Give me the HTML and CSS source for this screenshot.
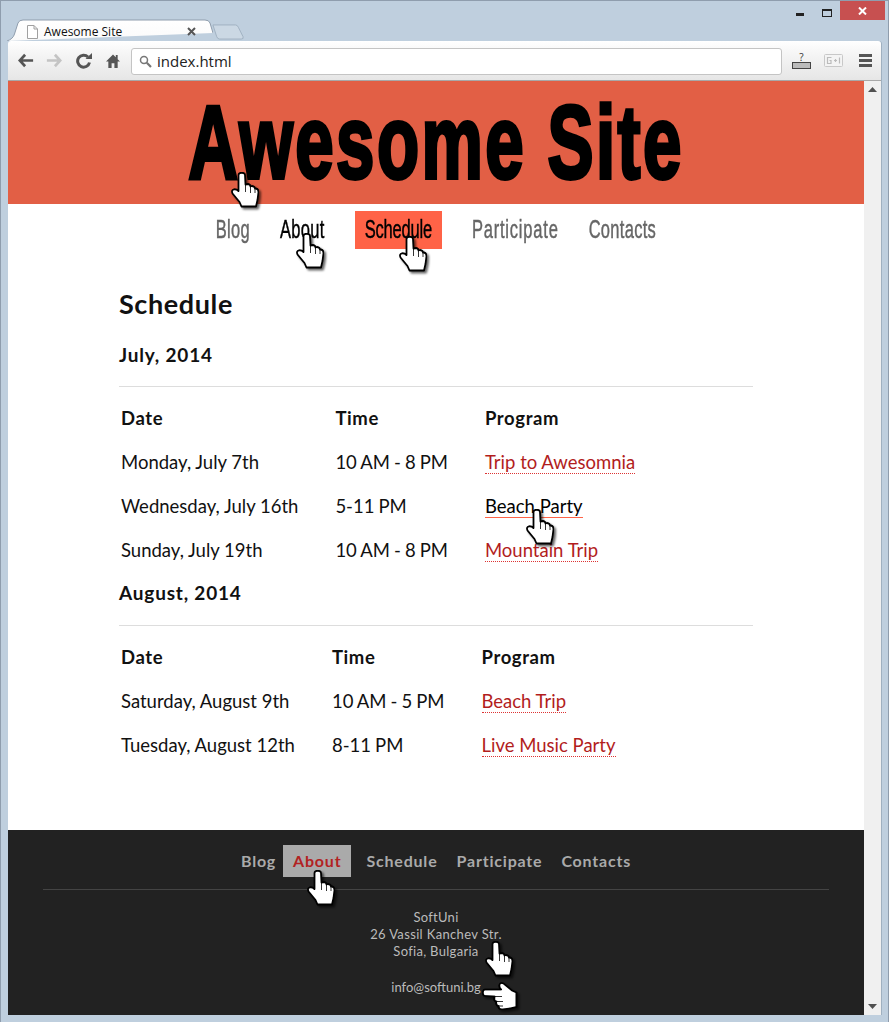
FILE: index.html
```html
<!DOCTYPE html>
<html>
    <head>
        <title>Awesome Site</title>
        <link rel="stylesheet" href="styles.css">
    </head>

    <body>
        <svg class="defs" width="0" height="0">
            <symbol id="hand" viewBox="0 0 28 36">
                <path d="M7.500 3C7.500 0 14 0 14 3L14.500 12.500 17 12Q19.500 12.500 19.500 14.500L21 14Q24 14.500 24 16.500L25 16.500Q27.500 17 27.500 20L26.500 28 25 34.500H10.500L8.500 30 1.500 21.500Q0 18 3 17.300 5.500 17 7.500 19Z" fill="#fff" stroke="#000" stroke-width="1.800" stroke-linejoin="round"/>
                <path d="M14.500 12.500V20M19.500 14.500V21M24 16.500V21" fill="none" stroke="#000" stroke-width=".8"/>
            </symbol>
        </svg>

        <div class="window">
            <div class="titlebar">
                <div class="tab">
                    <svg class="tabShape" width="206" height="22" viewBox="0 0 206 22">
                        <defs>
                            <linearGradient id="tabFill" x1="0" y1="0" x2="0" y2="1">
                                <stop offset="0" stop-color="#fff"/>
                                <stop offset="1" stop-color="#fafafa"/>
                            </linearGradient>
                        </defs>
                        <path d="M0 22Q6 20 7.500 15L11 4Q12 1 16 1H198Q202 1 203 4L206 14" fill="url(#tabFill)" stroke="#8f9dad"/>
                    </svg>
                    <svg class="pageIcon" width="11" height="14" viewBox="0 0 11 14">
                        <path d="M.5 .5H7L10.500 4V13.500H.5ZM7 .5V4H10.500" fill="#fff" stroke="#a0a0a0"/>
                    </svg>
                    <span class="tabTitle">Awesome Site</span>
                    <svg class="tabClose" width="9" height="9" viewBox="0 0 9 9">
                        <path d="M1 1L8 8M8 1L1 8" stroke="#555" stroke-width="2"/>
                    </svg>
                </div>
                <svg class="newTab" width="32" height="18" viewBox="0 0 34 18">
                    <path d="M1 1.500H25Q27 1.500 28 4L33 14Q34 16.500 31 16.500H8Q6 16.500 5 14Z" fill="#cbd8e4" stroke="#9fb0c0"/>
                </svg>
                <div class="windowControls">
                    <svg width="8" height="3" class="minimize"><rect width="8" height="3" fill="#222"/></svg>
                    <svg width="10" height="8" class="maximize"><rect x=".5" y=".5" width="9" height="7" fill="none" stroke="#222"/><rect width="10" height="2" fill="#222"/></svg>
                    <div class="closeButton">
                        <svg width="9" height="8" viewBox="0 0 9 8"><path d="M1 .5L8 7.500M8 .5L1 7.500" stroke="#fff" stroke-width="2"/></svg>
                    </div>
                </div>
            </div>

            <div class="toolbar">
                <svg class="back" width="16" height="15" viewBox="0 0 18 16"><path d="M8 1.500L2 8 8 14.500M2.500 8H17" fill="none" stroke="#555" stroke-width="3"/></svg>
                <svg class="forward" width="16" height="15" viewBox="0 0 18 16"><path d="M10 1.500L16 8 10 14.500M15.500 8H1" fill="none" stroke="#c4c4c4" stroke-width="3"/></svg>
                <svg class="reload" width="16" height="16" viewBox="0 0 16 16"><path d="M13.500 9.500A6 6 0 1 1 12 4" fill="none" stroke="#555" stroke-width="3"/><path d="M9.500 6H16V0Z" fill="#555"/></svg>
                <svg class="home" width="14" height="16" viewBox="0 0 15 16"><path d="M7.500 1L0 8.500H2.500V15.500H6V10.500H9V15.500H12.500V8.500H15L12.500 6V1.500H10.500V4Z" fill="#555"/></svg>
                <div class="addressBar">
                    <svg width="13" height="13" viewBox="0 0 13 13"><circle cx="5" cy="5" r="3.500" fill="none" stroke="#777" stroke-width="1.500"/><path d="M7.800 7.800L12 12" stroke="#777" stroke-width="2.200"/></svg>
                    <span>index.html</span>
                </div>
                <div class="helpIcon">
                    <span>?</span>
                    <i></i>
                </div>
                <svg class="gplus" width="19" height="13" viewBox="0 0 19 13"><rect x=".5" y=".5" width="18" height="12" rx="1" fill="#f4f4f4" stroke="#c8c8c8"/><path d="M7.500 3.500H3.500V9.500H7V6.500H5.500M10 6.500H13M11.500 5V8M15.500 3.500V9.500" fill="none" stroke="#bbb" stroke-width="1.200"/></svg>
                <div class="menuIcon"><i></i><i></i><i></i></div>
            </div>

            <div class="viewport">
                <div class="page">
                    <header class="siteHeader">
                        <h1><span class="label">Awesome Site</span><svg class="cursor cursorTitle"><use href="#hand"/></svg></h1>
                    </header>

                    <nav class="mainNav">
                        <a href="#"><span class="label">Blog</span></a>
                        <a href="#" class="hovered"><span class="label">About</span><svg class="cursor cursorAbout"><use href="#hand"/></svg></a>
                        <a href="#" class="active"><span class="label">Schedule</span><svg class="cursor cursorSchedule"><use href="#hand"/></svg></a>
                        <a href="#" class="wide"><span class="label">Participate</span></a>
                        <a href="#"><span class="label">Contacts</span></a>
                    </nav>

                    <main class="content">
                        <h2>Schedule</h2>

                        <h3>July, 2014</h3>
                        <hr>
                        <table>
                            <tr><th>Date</th><th>Time</th><th>Program</th></tr>
                            <tr><td>Monday, July 7th</td><td>10 AM - 8 PM</td><td><a href="#">Trip to Awesomnia</a></td></tr>
                            <tr><td>Wednesday, July 16th</td><td>5-11 PM</td><td><a href="#" class="hovered">Beach Party<svg class="cursor cursorBeach"><use href="#hand"/></svg></a></td></tr>
                            <tr><td>Sunday, July 19th</td><td>10 AM - 8 PM</td><td><a href="#">Mountain Trip</a></td></tr>
                        </table>

                        <h3 class="second">August, 2014</h3>
                        <hr class="secondRule">
                        <table>
                            <tr><th>Date</th><th>Time</th><th>Program</th></tr>
                            <tr><td>Saturday, August 9th</td><td>10 AM - 5 PM</td><td><a href="#">Beach Trip</a></td></tr>
                            <tr><td>Tuesday, August 12th</td><td>8-11 PM</td><td><a href="#">Live Music Party</a></td></tr>
                        </table>
                    </main>

                    <footer class="siteFooter">
                        <nav class="footerNav">
                            <a href="#">Blog</a>
                            <a href="#" class="active">About<svg class="cursor cursorFooter"><use href="#hand"/></svg></a>
                            <a href="#">Schedule</a>
                            <a href="#">Participate</a>
                            <a href="#">Contacts</a>
                        </nav>
                        <hr>
                        <address>
                            SoftUni<br>
                            <span class="street">26 Vassil Kanchev Str.<svg class="cursor cursorStreet"><use href="#hand"/></svg></span><br>
                            Sofia, Bulgaria
                        </address>
                        <a href="#" class="mail">info@softuni.bg<svg class="cursor cursorMail"><use href="#hand"/></svg></a>
                    </footer>
                </div>

                <div class="scrollbar">
                    <svg width="9" height="5" viewBox="0 0 9 5"><path d="M4.500 0L9 5H0Z" fill="#505050"/></svg>
                    <svg width="9" height="5" viewBox="0 0 9 5"><path d="M0 0H9L4.500 5Z" fill="#505050"/></svg>
                </div>
            </div>
        </div>
    </body>
</html>
```

FILE: styles.css
```css
html, body {
    margin: 0;
    height: 100%;
    overflow: hidden;
}

body {
    background-color: #bfcfde;
    font-family: Lato, "Open Sans", sans-serif;
    color: #111;
}

.defs {
    display: block;
    height: 0;
}

.window {
    box-sizing: border-box;
    height: 1022px;
    padding: 0 7px 7px 7px;
    border: 1px solid #8f9dad;
    border-bottom: none;
    display: flex;
    flex-direction: column;
}

/* browser chrome */
.titlebar {
    height: 40px;
    display: flex;
    align-items: flex-end;
    position: relative;
    margin-left: -1px;
}

.tab {
    position: relative;
    width: 206px;
    height: 22px;
    display: flex;
    align-items: center;
    font-family: "Open Sans", sans-serif;
    font-size: 12px;
    z-index: 1;
    padding-top: 3px;
    box-sizing: border-box;
}

.tabShape {
    position: absolute;
    left: 0;
    top: 0;
}

.pageIcon {
    position: relative;
    margin-left: 20px;
}

.tabTitle {
    position: relative;
    margin-left: 6px;
    width: 143px;
}

.tabClose {
    position: relative;
}

.newTab {
    margin-left: -1px;
    margin-bottom: 0;
}

.windowControls {
    margin-left: auto;
    margin-right: -4px;
    align-self: flex-start;
    display: flex;
    align-items: flex-start;
}

.minimize {
    margin: 12px 18px 0 0;
}

.maximize {
    margin: 8px 8px 0 0;
}

.closeButton {
    width: 45px;
    height: 19px;
    background-color: #c75050;
    display: flex;
    align-items: center;
    justify-content: center;
}

.toolbar {
    height: 40px;
    box-sizing: border-box;
    background: linear-gradient(#fff, #f6f6f6 30%, #e6e6e6);
    border-bottom: 1px solid #a8a8a8;
    border-radius: 3px 3px 0 0;
    box-shadow: 1px 0 0 #9fb0c0;
    display: flex;
    align-items: center;
    padding-left: 10px;
}

.toolbar > .back {
    margin-right: 12px;
}

.toolbar > .forward {
    margin-right: 14px;
}

.toolbar > .reload {
    margin-right: 14px;
}

.toolbar > .home {
    margin-right: 9px;
}

.addressBar {
    box-sizing: border-box;
    width: 651px;
    height: 27px;
    margin: 1px 10px 0 2px;
    padding-left: 7px;
    background-color: #fff;
    border: 1px solid #c4c4c4;
    border-radius: 3px;
    display: flex;
    align-items: center;
    gap: 5px;
    font-family: "Open Sans", sans-serif;
    font-size: 15px;
    color: #222;
}

.helpIcon {
    width: 19px;
    margin-right: 13px;
    font-family: "Open Sans", sans-serif;
    font-size: 10px;
    line-height: 10px;
    text-align: center;
    color: #333;
}

.helpIcon i {
    display: block;
    box-sizing: border-box;
    height: 7px;
    background-color: #bbb;
    border: 1px solid #444;
}

.toolbar > .gplus {
    margin-right: 16px;
}

.menuIcon {
    display: flex;
    flex-direction: column;
    gap: 2px;
}

.menuIcon i {
    display: block;
    width: 13px;
    height: 3px;
    background-color: #555;
}

.viewport {
    flex: 1;
    display: flex;
    min-height: 0;
}

.page {
    flex: 1;
    display: flex;
    flex-direction: column;
    background-color: #fff;
}

.scrollbar {
    width: 17px;
    background-color: #f0f0f0;
    display: flex;
    flex-direction: column;
    justify-content: space-between;
    align-items: center;
    padding: 6px 0;
    box-sizing: border-box;
    box-shadow: 1px 0 0 #9fb0c0;
}

.cursor {
    position: absolute;
    width: 28px;
    height: 36px;
    filter: drop-shadow(2px 2px 1px rgba(0, 0, 0, 0.6));
    z-index: 2;
}

.label {
    display: inline-block;
}

/* site */
.siteHeader {
    height: 123px;
    background-color: #e25f45;
    text-align: center;
}

.siteHeader h1 {
    display: inline-block;
    position: relative;
    margin: 0;
    font-family: "Liberation Sans", sans-serif;
    font-size: 69px;
    line-height: 123px;
    font-weight: bold;
    letter-spacing: 2.400px;
    color: #000;
}

.siteHeader .label {
    transform: scaleY(1.500);
    -webkit-text-stroke: 2.500px #000;
}

.cursorTitle {
    left: 43px;
    top: 91px;
}

.mainNav {
    display: flex;
    justify-content: center;
    gap: 10px;
    padding-top: 7px;
    height: 45px;
    box-sizing: border-box;
    font-family: "Liberation Sans", sans-serif;
    font-size: 16.500px;
    letter-spacing: 0.300px;
}

.mainNav a {
    position: relative;
    height: 38px;
    line-height: 37px;
    padding: 0 10px;
    text-decoration: none;
    color: #666;
}

.mainNav .label {
    transform: scaleY(1.550);
    -webkit-text-stroke: 0.300px currentColor;
}

.mainNav a.hovered {
    color: #000;
}

.mainNav a.active {
    color: #000;
    background-color: #ff6347;
    margin: 0 10px;
    letter-spacing: -0.200px;
}

.mainNav a.wide {
    letter-spacing: 0.800px;
}

.cursorAbout {
    left: 26px;
    top: 22px;
}

.cursorSchedule {
    left: 44px;
    top: 25px;
}

.content {
    flex: 1;
    box-sizing: border-box;
    width: 634px;
    margin: 0 auto;
}

h2 {
    margin: 37px 0 0 0;
    font-size: 27px;
    line-height: 36px;
    font-weight: bold;
    letter-spacing: 0.600px;
}

h3 {
    margin: 22px 0 0 0;
    font-size: 19px;
    line-height: 22px;
    font-weight: bold;
    letter-spacing: 0.800px;
}

h3.second {
    margin-top: 0;
    padding-top: 10px;
}

hr {
    margin: 20px 0 0 0;
    border: none;
    border-top: 1px solid #ddd;
}

hr.secondRule {
    margin-top: 21px;
}

table {
    border-collapse: collapse;
    margin-top: 9px;
    font-size: 18.500px;
}

th, td {
    height: 44px;
    padding: 0 35px 0 2px;
    text-align: left;
}

th {
    font-weight: bold;
    letter-spacing: 0.600px;
}

td:nth-child(2) {
    word-spacing: -0.700px;
}

td a {
    position: relative;
    display: inline-block;
    padding-top: 1px;
    line-height: 22px;
    color: #b21d1d;
    text-decoration: none;
    border-bottom: 1px dotted #d33;
}

td a.hovered {
    color: #000;
    border-bottom: 1px solid #ff6347;
}

.cursorBeach {
    left: 41px;
    top: 15px;
}

.siteFooter {
    height: 185px;
    background-color: #222;
    text-align: center;
    padding-top: 15px;
    box-sizing: border-box;
}

.footerNav {
    display: flex;
    justify-content: center;
    gap: 19px;
    font-size: 16px;
    font-weight: bold;
    letter-spacing: 0.800px;
}

.footerNav a {
    position: relative;
    line-height: 32px;
    color: #aaa;
    text-decoration: none;
}

.footerNav a.active {
    color: #b22222;
    background-color: #aaa;
    padding: 0 10px;
    margin: 0 -4px 0 -12px;
}

.cursorFooter {
    left: 24px;
    top: 25px;
}

.siteFooter hr {
    margin: 12px 35px 0 35px;
    border-top-color: #444;
}

address {
    margin-top: 19px;
    font-style: normal;
    font-size: 13px;
    line-height: 17px;
    color: #bbb;
    letter-spacing: 0.300px;
}

.street {
    position: relative;
    letter-spacing: 0.350px;
}

.cursorStreet {
    left: 115px;
    top: 15px;
}

.mail {
    display: inline-block;
    position: relative;
    margin-top: 19px;
    font-size: 13px;
    line-height: 17px;
    color: #bbb;
    text-decoration: none;
}

.cursorMail {
    left: 95px;
    top: -1px;
    transform: rotate(-90deg) scaleX(-1);
}
```
